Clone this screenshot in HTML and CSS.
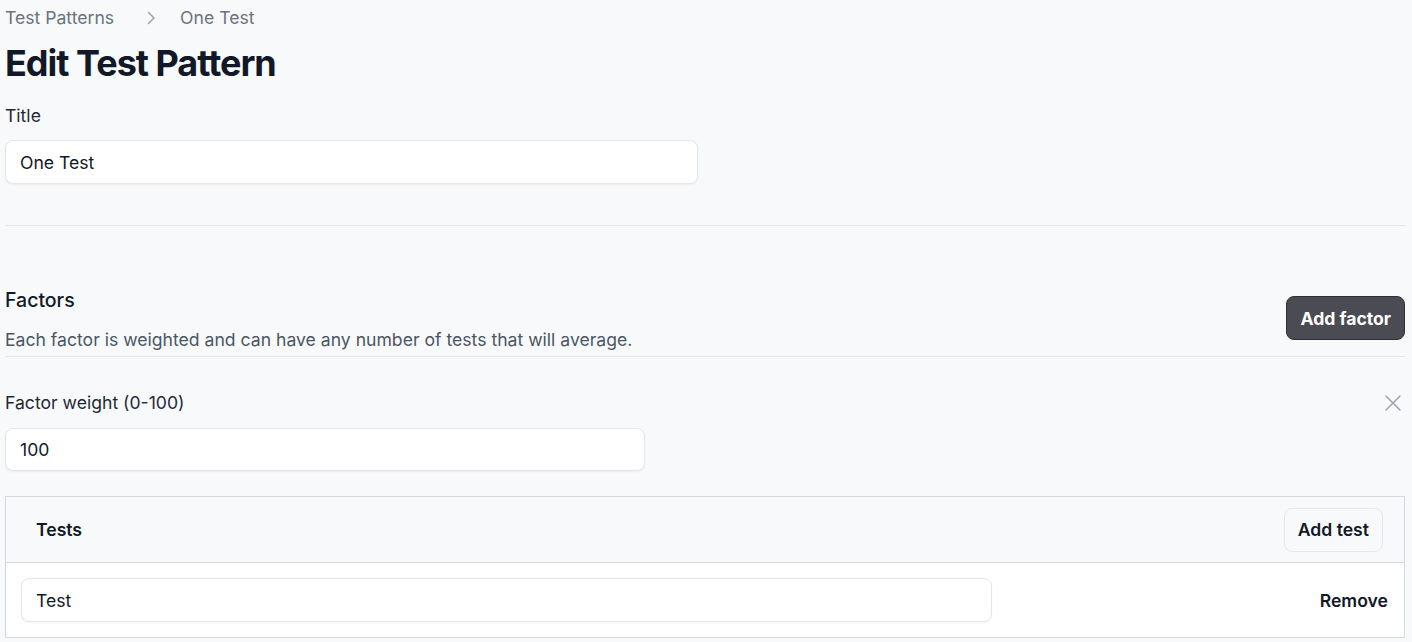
FILE: index.html
```html
<!DOCTYPE html>
<html>
<head>
<meta charset="utf-8">
<link rel="stylesheet" href="styles.css">
</head>
<body>
<div class="page">
  <nav class="crumbs">
    <span class="crumb">Test Patterns</span>
    <svg class="chev" width="20" height="20" viewBox="0 0 20 20"><path d="M7.5 4.5 L13 10 L7.5 15.5" fill="none" stroke="#9ca3af" stroke-width="1.5" stroke-linecap="round" stroke-linejoin="round"/></svg>
    <span class="crumb">One Test</span>
  </nav>
  <h1 class="title">Edit Test Pattern</h1>

  <section class="field">
    <label class="label">Title</label>
    <div class="input wide">One Test</div>
  </section>

  <hr class="divider first">

  <section class="factors-head">
    <div>
      <h2 class="h2">Factors</h2>
      <p class="desc">Each factor is weighted and can have any number of tests that will average.</p>
    </div>
    <button class="btn-dark">Add factor</button>
  </section>
  <hr class="divider">

  <section class="factor">
    <div class="factor-top">
      <label class="label">Factor weight (0-100)</label>
      <svg class="close" width="18" height="18" viewBox="0 0 18 18"><path d="M2 2 L16 16 M16 2 L2 16" stroke="#9ca3af" stroke-width="1.5" stroke-linecap="round"/></svg>
    </div>
    <div class="input mid">100</div>

    <div class="tests">
      <div class="tests-head">
        <span class="tests-title">Tests</span>
        <button class="btn-light">Add test</button>
      </div>
      <div class="tests-row">
        <div class="input row-input">Test</div>
        <button class="btn-link">Remove</button>
      </div>
    </div>
  </section>
</div>
</body>
</html>
```
FILE: styles.css
```css
* { box-sizing: border-box; }
html, body { margin: 0; padding: 0; }
body {
  background: #f8f9fb;
  font-family: Inter, "Noto Sans", sans-serif;
  color: #111827;
  font-size: 17.6px;
}
.page {
  padding: 0 7px 0 5px;
}
.crumbs {
  display: flex;
  align-items: center;
  height: 36px;
  font-size: 17.6px;
  color: #6b7280;
}
.crumb { line-height: 20px; }
.chev { margin: 0 19px 0 27px; }
.title {
  margin: 4px 0 0;
  font-size: 36px;
  line-height: 46px;
  font-weight: 700;
  letter-spacing: -0.028em;
  color: #111827;
}
.field { margin-top: 19px; }
.label {
  display: block;
  font-size: 17.6px;
  line-height: 22px;
  color: #1f2937;
}
.input {
  background: #fff;
  border: 1px solid #e5e7eb;
  border-radius: 8px;
  box-shadow: 0 1px 2px rgba(0,0,0,0.05);
  height: 44px;
  display: flex;
  align-items: center;
  padding: 0 14px;
  font-size: 17.6px;
  color: #111827;
}
.wide { width: 693px; margin-top: 13px; }
.mid { width: 640px; margin-top: 14px; height: 43px; }
.divider {
  border: 0;
  border-top: 1px solid #e5e7eb;
  margin: 0;
}
.divider.first { margin-top: 41px; }
.factors-head {
  display: flex;
  justify-content: space-between;
  align-items: flex-start;
  margin-top: 61px;
  padding-bottom: 4px;
}
.h2 {
  margin: 0;
  font-size: 19.5px;
  line-height: 26px;
  font-weight: 500;
  color: #111827;
}
.desc {
  margin: 15px 0 0;
  font-size: 17.6px;
  line-height: 24px;
  color: #4b5563;
}
.btn-dark {
  font-family: inherit;
  background: #4b4b53;
  color: #fff;
  border: 1px solid #2f2f35;
  border-radius: 8px;
  height: 44px;
  padding: 0 13px;
  font-size: 17.6px;
  font-weight: 700;
  margin-top: 9px;
}
.factor { padding-top: 35px; }
.factor-top {
  display: flex;
  justify-content: space-between;
  align-items: center;
}
.close { margin-right: 3px; }
.tests {
  margin-top: 25px;
  border: 1px solid #d4d7df;
  background: #fff;
}
.tests-head {
  display: flex;
  justify-content: space-between;
  align-items: center;
  height: 66px;
  padding: 0 21px 0 30px;
  background: #f8f9fb;
  border-bottom: 1px solid #d4d7df;
}
.tests-title {
  font-size: 17.6px;
  font-weight: 600;
  color: #111827;
}
.btn-light {
  font-family: inherit;
  background: #f8f9fb;
  border: 1px solid #e5e7eb;
  border-radius: 8px;
  height: 44px;
  padding: 0 13px;
  font-size: 17.6px;
  font-weight: 600;
  color: #111827;
}
.tests-row {
  display: flex;
  justify-content: space-between;
  align-items: center;
  padding: 15px 16px 15px 15px;
}
.row-input { width: 971px; height: 44px; }
.btn-link {
  font-family: inherit;
  background: none;
  border: 0;
  padding: 0;
  font-size: 17.6px;
  font-weight: 600;
  color: #111827;
}
```
